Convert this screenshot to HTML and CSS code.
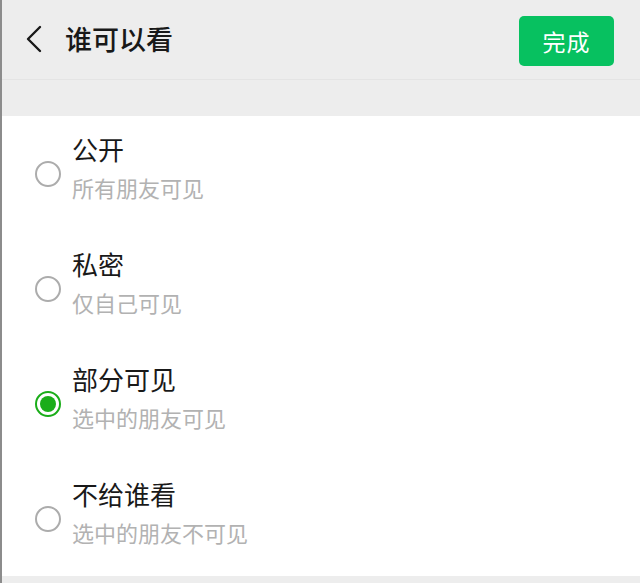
FILE: index.html
```html
<!DOCTYPE html>
<html lang="zh-CN">
<head>
  <meta charset="UTF-8" />
  <meta name="viewport" content="width=device-width, initial-scale=1.0" />
  <title>谁可以看</title>
  <link rel="stylesheet" href="styles.css">
</head>
<body>
  <div class="page">
    <!-- 顶部栏 -->
    <header class="topbar">
      <div class="topbar-left">
        <svg class="back-icon" viewBox="0 0 18 28" width="18" height="28">
          <path d="M15 2 L3 14 L15 26" fill="none" stroke="#191919" stroke-width="2.4" stroke-linecap="round" stroke-linejoin="round"/>
        </svg>
        <h1 class="title">谁可以看</h1>
      </div>
      <button class="done-btn">完成</button>
    </header>
    <div class="spacer"></div>

    <!-- 选项列表 -->
    <ul class="option-list">
      <li class="option">
        <span class="radio"></span>
        <div class="option-text">
          <div class="option-title">公开</div>
          <div class="option-desc">所有朋友可见</div>
        </div>
      </li>
      <li class="option">
        <span class="radio"></span>
        <div class="option-text">
          <div class="option-title">私密</div>
          <div class="option-desc">仅自己可见</div>
        </div>
      </li>
      <li class="option">
        <span class="radio checked"></span>
        <div class="option-text">
          <div class="option-title">部分可见</div>
          <div class="option-desc">选中的朋友可见</div>
        </div>
      </li>
      <li class="option">
        <span class="radio"></span>
        <div class="option-text">
          <div class="option-title">不给谁看</div>
          <div class="option-desc">选中的朋友不可见</div>
        </div>
      </li>
    </ul>
    <div class="footer-gap"></div>
  </div>
</body>
</html>
```
FILE: styles.css
```css
:root {
  --bg-gray: #ededed;
  --green: #07c160;
  --radio-green: #1aad19;
  --text: #191919;
  --desc: #b2b2b2;
}
* {
  box-sizing: border-box;
  margin: 0;
  padding: 0;
}
body {
  font-family: "Noto Sans CJK SC", "Noto Sans", sans-serif;
  background: #fff;
  color: var(--text);
}
.page {
  height: 583px;
  border-left: 2px solid #8c8c8c;
  display: flex;
  flex-direction: column;
  overflow: hidden;
}
.topbar {
  height: 80px;
  background: var(--bg-gray);
  border-bottom: 1px solid #e4e4e4;
  display: flex;
  align-items: center;
  justify-content: space-between;
  padding: 0 26px 0 23px;
}
.topbar-left {
  display: flex;
  align-items: center;
}
.back-icon {
  display: block;
  margin-right: 22px;
  margin-top: -2px;
}
.title {
  font-size: 27px;
  font-weight: 500;
  line-height: 1;
  margin-top: -2px;
}
.done-btn {
  width: 95px;
  height: 50px;
  margin-top: 2px;
  border: none;
  border-radius: 5px;
  background: var(--green);
  color: #fff;
  font-family: inherit;
  font-size: 23px;
  letter-spacing: 1px;
}
.spacer {
  height: 36px;
  background: var(--bg-gray);
}
.option-list {
  list-style: none;
  background: #fff;
}
.option {
  height: 115px;
  display: flex;
  align-items: center;
  padding-left: 33px;
}
.radio {
  width: 26px;
  height: 26px;
  border-radius: 50%;
  border: 2px solid #acacac;
  margin-right: 11px;
  flex-shrink: 0;
  display: flex;
  align-items: center;
  justify-content: center;
}
.radio.checked {
  border-color: var(--radio-green);
}
.radio.checked::after {
  content: '';
  width: 16px;
  height: 16px;
  border-radius: 50%;
  background: var(--radio-green);
}
.option-text {
  margin-bottom: 13px;
}
.option-title {
  font-size: 26px;
  line-height: 32px;
}
.option-desc {
  font-size: 22px;
  line-height: 28px;
  margin-top: 8px;
  color: var(--desc);
}
.footer-gap {
  flex: 1;
  background: var(--bg-gray);
}
```
